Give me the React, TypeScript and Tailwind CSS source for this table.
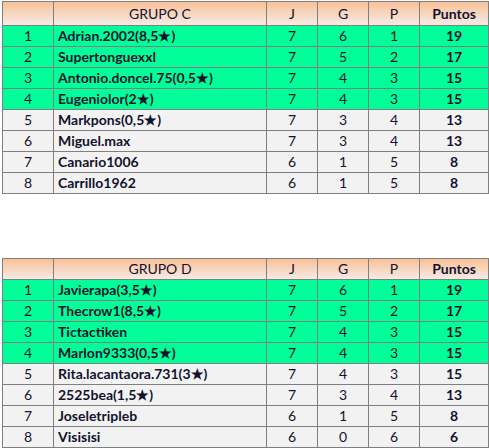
const groups = [
  {
    name: "GRUPO C",
    headH: "h-[24px]",
    mt: "mt-px",
    rows: [
      { n: 1, name: "Adrian.2002(8,5★)", j: 7, g: 6, p: 1, pts: 19, top: true },
      { n: 2, name: "Supertonguexxl", j: 7, g: 5, p: 2, pts: 17, top: true },
      { n: 3, name: "Antonio.doncel.75(0,5★)", j: 7, g: 4, p: 3, pts: 15, top: true },
      { n: 4, name: "Eugeniolor(2★)", j: 7, g: 4, p: 3, pts: 15, top: true },
      { n: 5, name: "Markpons(0,5★)", j: 7, g: 3, p: 4, pts: 13, top: false },
      { n: 6, name: "Miguel.max", j: 7, g: 3, p: 4, pts: 13, top: false },
      { n: 7, name: "Canario1006", j: 6, g: 1, p: 5, pts: 8, top: false },
      { n: 8, name: "Carrillo1962", j: 6, g: 1, p: 5, pts: 8, top: false },
    ],
  },
  {
    name: "GRUPO D",
    headH: "h-[21px]",
    mt: "mt-[64px]",
    rows: [
      { n: 1, name: "Javierapa(3,5★)", j: 7, g: 6, p: 1, pts: 19, top: true },
      { n: 2, name: "Thecrow1(8,5★)", j: 7, g: 5, p: 2, pts: 17, top: true },
      { n: 3, name: "Tictactiken", j: 7, g: 4, p: 3, pts: 15, top: true },
      { n: 4, name: "Marlon9333(0,5★)", j: 7, g: 4, p: 3, pts: 15, top: true },
      { n: 5, name: "Rita.lacantaora.731(3★)", j: 7, g: 4, p: 3, pts: 15, top: false },
      { n: 6, name: "2525bea(1,5★)", j: 7, g: 3, p: 4, pts: 13, top: false },
      { n: 7, name: "Joseletripleb", j: 6, g: 1, p: 5, pts: 8, top: false },
      { n: 8, name: "Visisisi", j: 6, g: 0, p: 6, pts: 6, top: false },
    ],
  },
];

const cell = "border border-[#7f7f7f] px-1 leading-none";

export default function App() {
  return (
    <div className="bg-white w-[489px] h-[448px] overflow-hidden text-[14px] text-[#12122e] font-['Lato',sans-serif]">
      {groups.map((grp) => (
        <table key={grp.name} className={`${grp.mt} ml-[2px] border-collapse table-fixed w-[486px]`}>
          <colgroup>
            <col className="w-[51px]" />
            <col className="w-[213px]" />
            <col className="w-[51px]" />
            <col className="w-[51px]" />
            <col className="w-[51px]" />
            <col className="w-[69px]" />
          </colgroup>
          <thead>
            <tr className={`${grp.headH} bg-gradient-to-b from-[#f9c096] to-[#f4ede8]`}>
              <th className={cell}></th>
              <th className={`${cell} font-normal text-center`}>{grp.name}</th>
              <th className={`${cell} font-normal text-center`}>J</th>
              <th className={`${cell} font-normal text-center`}>G</th>
              <th className={`${cell} font-normal text-center`}>P</th>
              <th className={`${cell} font-bold text-center`}>Puntos</th>
            </tr>
          </thead>
          <tbody>
            {grp.rows.map((r) => (
              <tr key={r.n} className={`h-[21px] ${r.top ? "bg-[#00ff99]" : "bg-[#f2f2f2]"}`}>
                <td className={`${cell} text-center`}>{r.n}</td>
                <td className={`${cell} font-bold text-left`}>{r.name}</td>
                <td className={`${cell} text-center`}>{r.j}</td>
                <td className={`${cell} text-center`}>{r.g}</td>
                <td className={`${cell} text-center`}>{r.p}</td>
                <td className={`${cell} font-bold text-center`}>{r.pts}</td>
              </tr>
            ))}
          </tbody>
        </table>
      ))}
    </div>
  );
}
